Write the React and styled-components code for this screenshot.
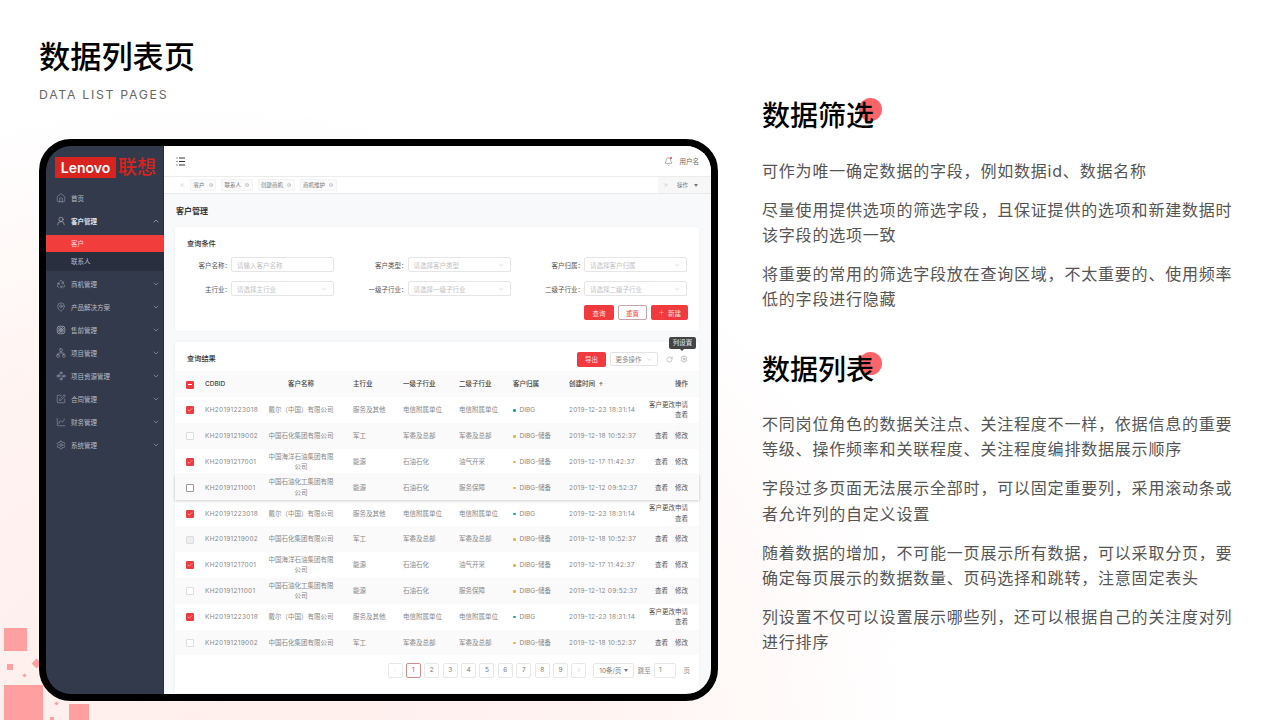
import React from "react";
import styled, { createGlobalStyle } from "styled-components";
import {
  House,
  UserRound,
  Recycle,
  MapPin,
  Network,
  Waypoints,
  SquarePen,
  ChartSpline,
  Settings,
  ChevronUp,
  ChevronDown,
  RotateCw,
  Bell,
  Plus,
  Check,
  ChevronLeft,
  ChevronRight,
  ChevronsLeft,
  ChevronsRight,
  CircleX,
} from "lucide-react";

const FONT = `Inter, "Noto Sans CJK SC", sans-serif`;
const RED = "#f03a3e";

const GlobalStyle = createGlobalStyle`
  html, body {
    margin: 0;
    padding: 0;
    background: #fff;
  }
  * {
    box-sizing: border-box;
  }
`;

// rounded square with a petal shape, lucide has nothing close
const PresaleIcon = ({ size }) => (
  <svg width={size} height={size} viewBox="0 0 24 24" fill="none" stroke="currentColor" strokeWidth="1.600">
    <rect x="3" y="3" width="18" height="18" rx="5" />
    <circle cx="9" cy="9" r="2.600" />
    <circle cx="15" cy="9" r="2.600" />
    <circle cx="9" cy="15" r="2.600" />
    <circle cx="15" cy="15" r="2.600" />
  </svg>
);

const menu = [
  { icon: House, label: "首页" },
  { icon: UserRound, label: "客户管理", open: true, chevron: true },
  { icon: Recycle, label: "商机管理", chevron: true },
  { icon: MapPin, label: "产品解决方案", chevron: true },
  { icon: PresaleIcon, label: "售前管理", chevron: true },
  { icon: Network, label: "项目管理", chevron: true },
  { icon: Waypoints, label: "项目资源管理", chevron: true },
  { icon: SquarePen, label: "合同管理", chevron: true },
  { icon: ChartSpline, label: "财务管理", chevron: true },
  { icon: Settings, label: "系统管理", chevron: true },
];

const dell = {
  id: "KH20191223018",
  name: "戴尔（中国）有限公司",
  main: "服务及其他",
  first: "电信附属单位",
  second: "电信附属单位",
  owner: "DIBG",
  time: "2019-12-23 18:31:14",
  color: "#18a98b",
  long: true,
};
const sinopec = {
  id: "KH20191219002",
  name: "中国石化集团有限公司",
  main: "军工",
  first: "军委及总部",
  second: "军委及总部",
  owner: "DIBG-储备",
  time: "2019-12-18 10:52:37",
  color: "#eeb13c",
};
const cnooc = {
  id: "KH20191217001",
  name: "中国海洋石油集团有限公司",
  main: "能源",
  first: "石油石化",
  second: "油气开采",
  owner: "DIBG-储备",
  time: "2019-12-17 11:42:37",
  color: "#eeb13c",
};
const chem = {
  id: "KH20191211001",
  name: "中国石油化工集团有限公司",
  main: "能源",
  first: "石油石化",
  second: "服务保障",
  owner: "DIBG-储备",
  time: "2019-12-12 09:52:37",
  color: "#eeb13c",
};

const rows = [
  { ...dell, state: "on" },
  { ...sinopec, state: "off" },
  { ...cnooc, state: "on" },
  { ...chem, state: "strong", hover: true },
  { ...dell, state: "on" },
  { ...sinopec, state: "disabled" },
  { ...cnooc, state: "on" },
  { ...chem, state: "off" },
  { ...dell, state: "on" },
  { ...sinopec, state: "off" },
];

const filters = [
  { label: "客户名称", hint: "请输入客户名称" },
  { label: "客户类型", hint: "请选择客户类型", select: true },
  { label: "客户归属", hint: "请选择客户归属", select: true },
  { label: "主行业", hint: "请选择主行业", select: true },
  { label: "一级子行业", hint: "请选择一级子行业", select: true },
  { label: "二级子行业", hint: "请选择二级子行业", select: true },
];

const notes = [
  {
    title: "数据筛选",
    items: [
      "可作为唯一确定数据的字段，例如数据id、数据名称",
      "尽量使用提供选项的筛选字段，且保证提供的选项和新建数据时该字段的选项一致",
      "将重要的常用的筛选字段放在查询区域，不太重要的、使用频率低的字段进行隐藏",
    ],
  },
  {
    title: "数据列表",
    items: [
      "不同岗位角色的数据关注点、关注程度不一样，依据信息的重要等级、操作频率和关联程度、关注程度编排数据展示顺序",
      "字段过多页面无法展示全部时，可以固定重要列，采用滚动条或者允许列的自定义设置",
      "随着数据的增加，不可能一页展示所有数据，可以采取分页，要确定每页展示的数据数量、页码选择和跳转，注意固定表头",
      "列设置不仅可以设置展示哪些列，还可以根据自己的关注度对列进行排序",
    ],
  },
];

const App = () => {
  return (
    <Page>
      <GlobalStyle />
      <Deco $x={4} $y={628} $w={23} $h={23} />
      <Deco $x={7} $y={664} $w={6} $h={6} />
      <Deco $x={33} $y={660} $w={7} $h={7} $diamond />
      <Deco $x={23} $y={674} $w={3} $h={3} $diamond />
      <Deco $x={4} $y={685} $w={39} $h={35} />
      <Deco $x={69} $y={704} $w={20} $h={16} />
      <Deco $x={55} $y={702} $w={3} $h={3} $diamond />
      <Deco $x={50} $y={717} $w={4} $h={3} />

      <LeftColumn>
        <PageTitle>数据列表页</PageTitle>
        <PageSub>DATA LIST PAGES</PageSub>
        <Device>
          <Sidebar>
            <Logo>
              <LogoBox>Lenovo</LogoBox>
              <LogoCn>联想</LogoCn>
            </Logo>
            {menu.map((m) => (
              <React.Fragment key={m.label}>
                <MenuItem $open={m.open}>
                  <m.icon size={10} strokeWidth={1.1} />
                  <MenuLabel>{m.label}</MenuLabel>
                  {m.chevron &&
                    (m.open ? (
                      <ChevronUp size={8} strokeWidth={1.5} />
                    ) : (
                      <ChevronDown size={8} strokeWidth={1.5} />
                    ))}
                </MenuItem>
                {m.open && (
                  <SubMenu>
                    <SubItem $active>客户</SubItem>
                    <SubItem>联系人</SubItem>
                  </SubMenu>
                )}
              </React.Fragment>
            ))}
          </Sidebar>

          <Main>
            <TopBar>
              <svg width="10" height="9" viewBox="0 0 10 9" fill="none" stroke="#333" strokeWidth="1">
                <path d="M3 1h6M3 4.500h6M3 8h6M.5 1h1M.5 8h1M.5 4.500h1" />
              </svg>
              <TopRight>
                <BellWrap>
                  <Bell size={9} strokeWidth={1.2} color="#555" />
                  <BellDot />
                </BellWrap>
                用户名
              </TopRight>
            </TopBar>

            <TabBar>
              <ChevronsLeft size={6} strokeWidth={1.5} color="#999" />
              <Tab>客户 <CircleX size={4} strokeWidth={1.5} /></Tab>
              <Tab>联系人 <CircleX size={4} strokeWidth={1.5} /></Tab>
              <Tab>创建商机 <CircleX size={4} strokeWidth={1.5} /></Tab>
              <Tab>商机维护 <CircleX size={4} strokeWidth={1.5} /></Tab>
              <TabRight>
                <ChevronsRight size={6} strokeWidth={1.5} color="#999" />
                <span>操作</span>
                <MiniCaret />
              </TabRight>
            </TabBar>

            <Content>
              <ContentTitle>客户管理</ContentTitle>
              <Card>
                <CardTitle>查询条件</CardTitle>
                <FormGrid>
                  {filters.map((f) => (
                    <Field key={f.label}>
                      <FieldLabel>{f.label}：</FieldLabel>
                      <FieldInput>
                        {f.hint}
                        {f.select && <ChevronDown size={8} strokeWidth={1} color="#aaa" />}
                      </FieldInput>
                    </Field>
                  ))}
                </FormGrid>
                <FormActions>
                  <Btn $w={30} $primary>查询</Btn>
                  <Btn $w={29} $outline>重置</Btn>
                  <Btn $w={37} $primary>
                    <Plus size={7} strokeWidth={1.2} /> 新建
                  </Btn>
                </FormActions>
              </Card>

              <ResultCard>
                <Toolbar>
                  <CardTitle>查询结果</CardTitle>
                  <ToolRight>
                    <Btn $w={29} $primary>导出</Btn>
                    <MoreBtn>
                      更多操作 <ChevronDown size={7} strokeWidth={1} />
                    </MoreBtn>
                    <IconSlot>
                      <RotateCw size={7} strokeWidth={1.1} color="#666" />
                    </IconSlot>
                    <IconSlot>
                      <Settings size={8} strokeWidth={1.1} color="#666" />
                    </IconSlot>
                    <Tip>列设置</Tip>
                  </ToolRight>
                </Toolbar>

                <HeadRow>
                  <Box $state="mixed"><Dash /></Box>
                  <span>CDBID</span>
                  <NameCell>客户名称</NameCell>
                  <span>主行业</span>
                  <span>一级子行业</span>
                  <span>二级子行业</span>
                  <span>客户归属</span>
                  <span>创建时间 <SortMark>↑</SortMark></span>
                  <ActionCell>操作</ActionCell>
                </HeadRow>

                {rows.map((r, i) => (
                  <Row key={i} $odd={i % 2 === 1} $hover={r.hover}>
                    <Box $state={r.state}>
                      {r.state === "on" && <Check size={6} strokeWidth={2} color="#fff" />}
                    </Box>
                    <Spaced>{r.id}</Spaced>
                    <NameCell>{r.name}</NameCell>
                    <span>{r.main}</span>
                    <span>{r.first}</span>
                    <span>{r.second}</span>
                    <OwnerCell>
                      <Dot $color={r.color} />
                      {r.owner}
                    </OwnerCell>
                    <Spaced>{r.time}</Spaced>
                    <ActionCell>
                      {r.long ? (
                        <>
                          <ActionLine>客户更改申请</ActionLine>
                          <ActionLine>查看</ActionLine>
                        </>
                      ) : (
                        <ActionLine>
                          查看<ActionGap />修改
                        </ActionLine>
                      )}
                    </ActionCell>
                  </Row>
                ))}

                <Pager>
                  <PageBtn $muted><ChevronLeft size={6} strokeWidth={1} /></PageBtn>
                  {[1, 2, 3, 4, 5, 6, 7, 8, 9].map((n) => (
                    <PageBtn key={n} $active={n === 1}>{n}</PageBtn>
                  ))}
                  <PageBtn><ChevronRight size={6} strokeWidth={1} /></PageBtn>
                  <SizeSelect>10条/页 <MiniCaret /></SizeSelect>
                  <JumpText>跳至</JumpText>
                  <JumpInput>1</JumpInput>
                  <JumpText $ml={4}>页</JumpText>
                </Pager>
              </ResultCard>
            </Content>
          </Main>
        </Device>
      </LeftColumn>

      <RightColumn>
        {notes.map((n) => (
          <Section key={n.title}>
            <Heading>
              <HeadingDot />
              <HeadingText>{n.title}</HeadingText>
            </Heading>
            {n.items.map((t) => (
              <Para key={t}>{t}</Para>
            ))}
          </Section>
        ))}
      </RightColumn>
    </Page>
  );
};

const Page = styled.div`
  position: relative;
  width: 1280px;
  height: 720px;
  overflow: hidden;
  display: flex;
  font-family: ${FONT};
  background:
    radial-gradient(ellipse 720px 620px at 190px 720px, #ffeeec 0%, #fff3f1 55%, rgba(255, 255, 255, 0) 100%),
    #fff;
`;

const Deco = styled.div`
  position: absolute;
  left: ${(p) => p.$x}px;
  top: ${(p) => p.$y}px;
  width: ${(p) => p.$w}px;
  height: ${(p) => p.$h}px;
  background: #ff9f9f;
  transform: ${(p) => (p.$diamond ? "rotate(45deg)" : "none")};
`;

const LeftColumn = styled.div`
  position: relative;
  margin-left: 39px;
  width: 679px;
  padding-top: 35px;
`;

const PageTitle = styled.h1`
  margin: 0;
  font-size: 31.200px;
  line-height: 44px;
  font-weight: 500;
  color: #000;
`;

const PageSub = styled.div`
  margin-top: 8px;
  font-size: 12.300px;
  line-height: 16px;
  letter-spacing: 1.700px;
  color: #666;
`;

const Device = styled.div`
  margin-top: 36px;
  width: 679px;
  height: 562px;
  border: 7px solid #000;
  border-radius: 32px;
  overflow: hidden;
  display: flex;
  background: #000;
`;

const Sidebar = styled.div`
  width: 118px;
  flex: none;
  background: #333a4b;
  box-shadow: inset -1px 0 0 #262c3a;
  color: #b9bdc7;
`;

const Logo = styled.div`
  display: flex;
  align-items: center;
  gap: 2px;
  padding: 11px 0 8px 9px;
  height: 40px;
`;

const LogoBox = styled.div`
  width: 61px;
  height: 21px;
  background: #d8231f;
  color: #fff;
  font-weight: 600;
  font-size: 14px;
  line-height: 21px;
  text-align: center;
`;

const LogoCn = styled.div`
  font-size: 19px;
  line-height: 21px;
  font-weight: 500;
  color: #d8231f;
  white-space: nowrap;
`;

const MenuItem = styled.div`
  height: 23px;
  display: flex;
  align-items: center;
  padding: 0 4px 0 10px;
  font-size: 6.500px;
  font-weight: ${(p) => (p.$open ? 700 : 400)};
  color: ${(p) => (p.$open ? "#e3e5ea" : "#b9bdc7")};
`;

const MenuLabel = styled.span`
  flex: 1;
  margin-left: 5px;
`;

const SubMenu = styled.div`
  margin: 3px 0 1px;
  background: #292f3f;
`;

const SubItem = styled.div`
  height: ${(p) => (p.$active ? 17 : 19)}px;
  line-height: ${(p) => (p.$active ? 19 : 21)}px;
  padding-left: 25px;
  font-size: 6.500px;
  color: ${(p) => (p.$active ? "#fbd6d6" : "#b9bdc7")};
  background: ${(p) => (p.$active ? "#f23d3d" : "transparent")};
`;

const Main = styled.div`
  flex: 1;
  min-width: 0;
  display: flex;
  flex-direction: column;
  background: #f8f9fb;
`;

const TopBar = styled.div`
  height: 31px;
  flex: none;
  display: flex;
  align-items: center;
  justify-content: space-between;
  padding: 0 12px;
  background: #fff;
  border-bottom: 1px solid #ececec;
`;

const TopRight = styled.div`
  display: flex;
  align-items: center;
  gap: 7px;
  font-size: 6.500px;
  color: #666;
`;

const BellWrap = styled.span`
  position: relative;
  display: flex;
`;

const BellDot = styled.i`
  position: absolute;
  right: 1px;
  top: 0;
  width: 2px;
  height: 2px;
  border-radius: 50%;
  background: ${RED};
`;

const TabBar = styled.div`
  height: 17px;
  flex: none;
  display: flex;
  align-items: center;
  gap: 5px;
  padding-left: 15px;
  background: #fff;
  border-bottom: 1px solid #e9e9e9;
`;

const Tab = styled.div`
  display: flex;
  align-items: center;
  gap: 4px;
  height: 12px;
  padding: 0 2.500px;
  background: #fafafa;
  border: 1px solid #f4f4f4;
  font-size: 5.500px;
  color: #777;
  white-space: nowrap;
`;

const MiniCaret = styled.i`
  display: inline-block;
  width: 0;
  height: 0;
  border: 2px solid transparent;
  border-top: 3px solid #777;
  border-bottom: 0;
`;

const TabRight = styled.div`
  margin-left: auto;
  height: 100%;
  width: 53px;
  display: flex;
  align-items: center;
  gap: 8px;
  padding-left: 5px;
  background: #f7f7f7;
  font-size: 5.500px;
  color: #777;
  ${MiniCaret} {
    margin-left: -2px;
  }
`;

const Content = styled.div`
  flex: 1;
  min-height: 0;
  padding: 0 12px 0 11px;
`;

const ContentTitle = styled.div`
  height: 33px;
  padding-left: 1px;
  font-size: 8px;
  font-weight: 700;
  line-height: 34px;
  color: #333;
`;

const Card = styled.div`
  height: 104px;
  padding: 11px;
  background: #fff;
  border-radius: 2px;
  box-shadow: 0 0 3px rgba(0, 0, 0, 0.05);
`;

const CardTitle = styled.div`
  margin-left: 1px;
  font-size: 7.200px;
  line-height: 12px;
  font-weight: 500;
  color: #333;
`;

const FormGrid = styled.div`
  margin-top: 7px;
  display: grid;
  grid-template-columns: repeat(3, 148px);
  column-gap: 28.500px;
  row-gap: 9px;
`;

const Field = styled.div`
  display: flex;
  align-items: center;
  height: 15px;
`;

const FieldLabel = styled.div`
  width: 45px;
  flex: none;
  text-align: right;
  white-space: nowrap;
  font-size: 6.500px;
  color: #555;
`;

const FieldInput = styled.div`
  flex: 1;
  height: 100%;
  display: flex;
  align-items: center;
  justify-content: space-between;
  padding: 0 5px;
  background: #fff;
  border: 1px solid #e6e6e6;
  border-radius: 2px;
  font-size: 6.500px;
  color: #c2c2c2;
`;

const FormActions = styled.div`
  margin-top: 9px;
  display: flex;
  justify-content: flex-end;
  gap: 4px;
`;

const Btn = styled.div`
  width: ${(p) => p.$w}px;
  height: 15px;
  display: flex;
  align-items: center;
  justify-content: center;
  gap: 3px;
  border-radius: 2px;
  font-size: 6.500px;
  color: ${(p) => (p.$outline ? RED : "#fde0e0")};
  background: ${(p) => (p.$outline ? "#fff" : RED)};
  border: ${(p) => (p.$outline ? "1px solid #c9a5a5" : "none")};
`;

const ResultCard = styled.div`
  margin-top: 11px;
  height: 351px;
  background: #fff;
  box-shadow: 0 0 3px rgba(0, 0, 0, 0.05);
`;

const Toolbar = styled.div`
  height: 29px;
  padding: 10px 11px 5px 11px;
  display: flex;
  align-items: center;
  justify-content: space-between;
`;

const ToolRight = styled.div`
  position: relative;
  display: flex;
  align-items: center;
  gap: 4px;
`;

const MoreBtn = styled.div`
  width: 48px;
  height: 14px;
  display: flex;
  align-items: center;
  justify-content: center;
  gap: 4px;
  background: #fff;
  border: 1px solid #e4e4e4;
  border-radius: 2px;
  font-size: 6.500px;
  color: #888;
`;

const IconSlot = styled.div`
  width: 8px;
  margin-left: 3px;
  display: flex;
  justify-content: center;
`;

const Tip = styled.div`
  position: absolute;
  right: -8px;
  top: -15px;
  width: 27px;
  height: 12px;
  line-height: 12px;
  text-align: center;
  border-radius: 2px;
  font-size: 6.500px;
  color: #eee;
  background: #444;
  &::after {
    content: "";
    position: absolute;
    left: 11px;
    bottom: -2px;
    border: 2px solid transparent;
    border-top-color: #444;
    border-bottom: 0;
  }
`;

const COLUMNS = "19px 64px 84px 50px 56px 54px 56px 70px 49px";

const HeadRow = styled.div`
  height: 26px;
  padding: 1px 11px 0;
  display: grid;
  grid-template-columns: ${COLUMNS};
  align-items: center;
  background: #fafafa;
  font-size: 6.500px;
  line-height: 10.500px;
  font-weight: 500;
  color: #444;
  white-space: nowrap;
`;

const Row = styled.div`
  position: relative;
  height: 25.850px;
  padding: 1px 11px 0;
  display: grid;
  grid-template-columns: ${COLUMNS};
  align-items: center;
  background: ${(p) => (p.$odd ? "#fafafa" : "#fff")};
  box-shadow: ${(p) => (p.$hover ? "0 1px 3px rgba(0, 0, 0, 0.2)" : "none")};
  z-index: ${(p) => (p.$hover ? 1 : 0)};
  font-size: 6.500px;
  line-height: 10.500px;
  color: #888;
  white-space: nowrap;
`;

const Spaced = styled.span`
  letter-spacing: 0.280px;
`;

const NameCell = styled.span`
  width: 66px;
  margin-left: -1px;
  white-space: normal;
  text-align: center;
`;

const OwnerCell = styled.span`
  display: flex;
  align-items: center;
  gap: 4px;
`;

const Dot = styled.i`
  width: 2.500px;
  height: 2.500px;
  border-radius: 50%;
  background: ${(p) => p.$color};
`;

const SortMark = styled.span`
  margin-left: 2px;
  font-size: 5px;
`;

const ActionCell = styled.div`
  justify-self: end;
  text-align: right;
  color: #555;
`;

const ActionLine = styled.div``;

const ActionGap = styled.span`
  display: inline-block;
  width: 7px;
`;

const boxColors = {
  on: RED,
  mixed: RED,
  off: "#fff",
  strong: "#fff",
  disabled: "#eee",
};

const Box = styled.div`
  width: 8px;
  height: 8px;
  display: flex;
  align-items: center;
  justify-content: center;
  border-radius: 1px;
  background: ${(p) => boxColors[p.$state]};
  border: 1px solid
    ${(p) =>
      p.$state === "on" || p.$state === "mixed"
        ? RED
        : p.$state === "strong"
          ? "#999"
          : "#ddd"};
`;

const Dash = styled.i`
  width: 4px;
  height: 1px;
  background: #fff;
`;

const Pager = styled.div`
  padding: 7.500px 9px 0 0;
  display: flex;
  justify-content: flex-end;
  align-items: center;
  gap: 3.400px;
`;

const PageBtn = styled.div`
  width: 15px;
  height: 15px;
  display: flex;
  align-items: center;
  justify-content: center;
  border-radius: 2px;
  border: 1px solid ${(p) => (p.$active ? "#d98a8a" : "#e8e8e8")};
  font-size: 6.500px;
  color: ${(p) => (p.$active ? RED : p.$muted ? "#ccc" : "#777")};
  background: #fff;
`;

const SizeSelect = styled.div`
  width: 41px;
  height: 15px;
  margin-left: 3.500px;
  display: flex;
  align-items: center;
  justify-content: center;
  gap: 3px;
  border: 1px solid #e8e8e8;
  border-radius: 2px;
  font-size: 6.500px;
  color: #777;
`;

const JumpText = styled.span`
  margin-left: ${(p) => p.$ml || 0}px;
  font-size: 6.500px;
  color: #888;
`;

const JumpInput = styled.div`
  width: 22px;
  height: 15px;
  line-height: 13px;
  padding-left: 4px;
  border: 1px solid #e8e8e8;
  border-radius: 2px;
  font-size: 6.500px;
  color: #777;
`;

const RightColumn = styled.div`
  margin-left: 44px;
  width: 474px;
  padding-top: 96px;
  display: flex;
  flex-direction: column;
  gap: 23px;
`;

const Section = styled.section``;

const Heading = styled.div`
  position: relative;
  width: max-content;
  margin-bottom: 22.500px;
`;

const HeadingDot = styled.i`
  position: absolute;
  left: 97px;
  top: 2px;
  width: 23px;
  height: 23px;
  border-radius: 50%;
  background: #fb6468;
`;

const HeadingText = styled.h2`
  position: relative;
  margin: 0;
  font-size: 28px;
  line-height: 40px;
  font-weight: 500;
  color: #000;
`;

const Para = styled.p`
  margin: 0 0 14px;
  font-size: 16px;
  line-height: 25.200px;
  letter-spacing: 0.8px;
  color: #555;
`;

export default App;
